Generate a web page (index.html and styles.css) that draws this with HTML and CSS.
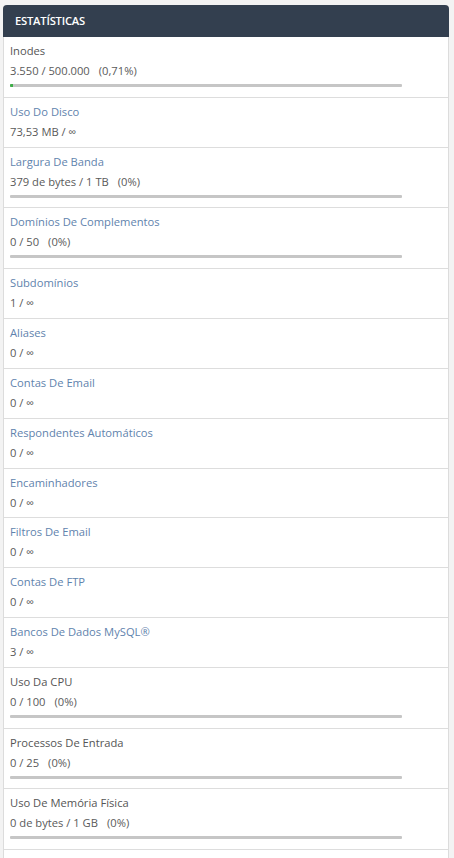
FILE: index.html
```html
<!DOCTYPE html>
<html lang="pt">
<head>
<meta charset="utf-8">
<title>Estatísticas</title>
<link rel="stylesheet" href="styles.css">
</head>
<body>
<div class="panel">
  <div class="panel-heading">ESTATÍSTICAS</div>
  <div class="row bar-row">
    <div class="label plain">Inodes</div>
    <div class="value">3.550 / 500.000<span class="pct">(0,71%)</span></div>
    <div class="bar"><div class="fill" style="width:0.71%"></div></div>
  </div>
  <div class="row">
    <div class="label">Uso Do Disco</div>
    <div class="value">73,53 MB / ∞</div>
  </div>
  <div class="row bar-row">
    <div class="label">Largura De Banda</div>
    <div class="value">379 de bytes / 1 TB<span class="pct">(0%)</span></div>
    <div class="bar"></div>
  </div>
  <div class="row bar-row">
    <div class="label">Domínios De Complementos</div>
    <div class="value">0 / 50<span class="pct">(0%)</span></div>
    <div class="bar"></div>
  </div>
  <div class="row">
    <div class="label">Subdomínios</div>
    <div class="value">1 / ∞</div>
  </div>
  <div class="row">
    <div class="label">Aliases</div>
    <div class="value">0 / ∞</div>
  </div>
  <div class="row">
    <div class="label">Contas De Email</div>
    <div class="value">0 / ∞</div>
  </div>
  <div class="row">
    <div class="label">Respondentes Automáticos</div>
    <div class="value">0 / ∞</div>
  </div>
  <div class="row">
    <div class="label">Encaminhadores</div>
    <div class="value">0 / ∞</div>
  </div>
  <div class="row">
    <div class="label">Filtros De Email</div>
    <div class="value">0 / ∞</div>
  </div>
  <div class="row">
    <div class="label">Contas De FTP</div>
    <div class="value">0 / ∞</div>
  </div>
  <div class="row">
    <div class="label">Bancos De Dados MySQL®</div>
    <div class="value">3 / ∞</div>
  </div>
  <div class="row bar-row">
    <div class="label plain">Uso Da CPU</div>
    <div class="value">0 / 100<span class="pct">(0%)</span></div>
    <div class="bar"></div>
  </div>
  <div class="row bar-row">
    <div class="label plain">Processos De Entrada</div>
    <div class="value">0 / 25<span class="pct">(0%)</span></div>
    <div class="bar"></div>
  </div>
  <div class="row bar-row">
    <div class="label plain">Uso De Memória Física</div>
    <div class="value">0 de bytes / 1 GB<span class="pct">(0%)</span></div>
    <div class="bar"></div>
  </div>
  <div class="row-tail"></div>
</div>
</body>
</html>
```

FILE: styles.css
```css
html, body {
  margin: 0;
  padding: 0;
  background: #f3f3f3;
}
body {
  padding: 5px 5px 0 3px;
  font-family: "Open Sans", "Liberation Sans", sans-serif;
  font-size: 11.2px;
  color: #595959;
  height: 858px;
  overflow: hidden;
  box-sizing: border-box;
}
.panel {
  background: #fff;
  border: 1px solid #dcdcdc;
  border-top: none;
  border-radius: 4px 4px 0 0;
}
.panel-heading {
  background: #333f4f;
  color: #fff;
  height: 32px;
  line-height: 32px;
  padding-left: 12px;
  font-size: 11.2px;
  font-weight: 600;
  letter-spacing: -0.2px;
  border-radius: 4px 4px 0 0;
  margin: 0 -1px;
}
.row {
  padding: 4px 6px 5.9px 6px;
  border-bottom: 1px solid #dddddd;
}
.bar-row {
  padding-bottom: 9.7px;
}
.label {
  line-height: 20px;
  color: #5f83ad;
}
.label.plain {
  color: #555555;
}
.value {
  line-height: 19px;
  color: #5a5a5a;
}
.pct {
  margin-left: 9px;
}
.bar {
  margin-top: 4px;
  width: 392px;
  height: 3px;
  background: #c6c6c6;
  border-radius: 1px;
  overflow: hidden;
}
.fill {
  height: 100%;
  min-width: 2px;
  background: #3fae49;
}
.row-tail {
  height: 20px;
}
```
